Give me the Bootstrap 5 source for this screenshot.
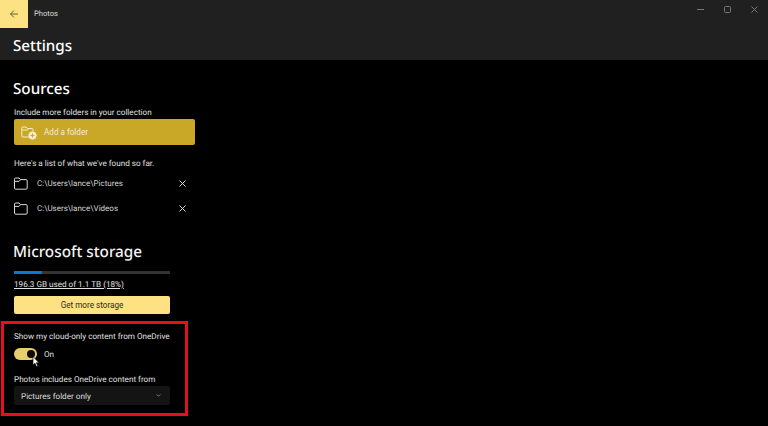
<!DOCTYPE html>
<html>
<head>
    <meta charset="UTF-8">
    <meta name="viewport" content="width=device-width, initial-scale=1">
    <title>Photos Settings</title>
    <link href="https://cdn.jsdelivr.net/npm/bootstrap@5.3.0/dist/css/bootstrap.min.css" rel="stylesheet">
    <style>
        html, body { height: 100%; }
        body {
            background-color: #000;
            color: #e0e0e0;
            font-family: Roboto, "Noto Sans", sans-serif;
            font-size: 8.15px;
            line-height: 12px;
            text-rendering: geometricPrecision;
            overflow: hidden;
        }
        .app-header { background-color: #202020; height: 60px; }
        .title-row { height: 28px; }
        .back-btn { width: 28px; height: 28px; background-color: #fde283; }
        .app-name { margin-left: 6px; font-size: 7.6px; color: #d8d8d8; }
        .win-btns { gap: 20px; padding-right: 10px; padding-top: 6px; align-self: flex-start; }
        .page-title, .head-sources, .head-storage { font-family: "Noto Sans", sans-serif; font-weight: 500; }
        .page-title { font-size: 15.2px; line-height: 20px; color: #fff; margin: 8px 0 0 13px; }
        .content-col { width: 195px; margin-left: 14px; }
        .head-sources { font-size: 15.2px; line-height: 20px; color: #fff; margin: 19px 0 0 -1px; }
        .note-a { margin-top: 7px; }
        .add-btn {
            display: flex; align-items: center; width: 181px; height: 26px; margin-top: 1px;
            padding: 0 0 0 7px; border: 0; border-radius: 2px;
            background-color: #c9a827; color: #f4eccd; font-size: 8.15px;
        }
        .add-btn svg { margin-right: 7px; }
        .note-b { margin-top: 12px; }
        .folder-row { height: 25px; width: 172px; }
        .folder-row span { margin-left: 9px; color: #d4d4d4; font-size: 8px; }
        .folder-list { margin-top: 2px; }
        .head-storage { font-size: 15.3px; line-height: 22px; color: #f4f4f4; margin: 20px 0 0 -1px; }
        .usage-track { width: 156px; height: 3px; background-color: #333; margin-top: 8px; }
        .usage-fill { height: 3px; background-color: #0a78d2; }
        .usage-text { display: block; color: #e0e0e0; margin-top: 4px; text-decoration: underline; }
        .more-btn {
            display: block; width: 156px; height: 18px; margin-top: 6px; padding: 0; border: 0; border-radius: 2px;
            background-color: #fde283; color: #2a2a2a; font-size: 8.15px; line-height: 18px;
        }
        .red-box {
            width: 187px; height: 95px; margin: 7px 0 0 -13px; padding: 6px 0 0 10px;
            border: 3px solid #e3101e;
        }
        .switch-row { margin-top: 6px; height: 12px; position: relative; }
        .switch-track { width: 23px; height: 12px; border-radius: 6px; background-color: #e7cd6d; position: relative; }
        .switch-knob { position: absolute; right: 2px; top: 2px; width: 8px; height: 8px; border-radius: 50%; background-color: #0a0a0a; }
        .switch-row span { margin-left: 7px; }
        .mouse-arrow { position: absolute; left: 18px; top: 8px; }
        .note-c { margin-top: 13px; }
        .drop-box {
            width: 156px; height: 19px; margin-top: 1px; padding: 0 9px 0 7px; border-radius: 2px;
            background-color: #141414; color: #dedede;
        }
    </style>
</head>
<body>
    <div class="app-header">
        <div class="title-row d-flex align-items-center">
            <div class="back-btn d-flex align-items-center justify-content-center">
                <svg width="10" height="10" viewBox="0 0 10 10" fill="none" stroke="#6a5f33" stroke-width="1"><path d="M9 5H1.5M5 1.5L1.5 5L5 8.5"/></svg>
            </div>
            <div class="app-name">Photos</div>
            <div class="win-btns d-flex ms-auto align-items-center">
                <svg width="7" height="7" viewBox="0 0 7 7" stroke="#777" fill="none"><path d="M0 3.5H7"/></svg>
                <svg width="7" height="7" viewBox="0 0 7 7" stroke="#777" fill="none"><rect x=".5" y=".5" width="6" height="6" rx="1"/></svg>
                <svg width="7" height="7" viewBox="0 0 7 7" stroke="#777" fill="none"><path d="M.5 .5L6.5 6.5M6.5 .5L.5 6.5"/></svg>
            </div>
        </div>
        <div class="page-title">Settings</div>
    </div>

    <div class="content-col">
        <div class="head-sources">Sources</div>
        <div class="note-a">Include more folders in your collection</div>
        <button type="button" class="add-btn">
            <svg width="16" height="15" viewBox="0 0 16 15" fill="none" stroke="#f4eccd" stroke-width="1"><path d="M12 6V4.5a1 1 0 0 0-1-1H6.5L5 2H1.8a1 1 0 0 0-1 1v8a1 1 0 0 0 1 1H8"/><path d="M1 5H6.5L7.5 3.7"/><circle cx="11.5" cy="10.5" r="3.7" fill="#f4eccd"/><path d="M11.5 8.5v4M9.5 10.5h4" stroke="#c9a827"/></svg>
            Add a folder
        </button>
        <div class="note-b">Here's a list of what we've found so far.</div>
        <div class="folder-list">
            <div class="folder-row d-flex align-items-center">
                <svg width="14" height="13" viewBox="0 0 14 13" fill="none" stroke="#d8d8d8"><path d="M.5 3V11a1.2 1.2 0 0 0 1.2 1.2H12a1.2 1.2 0 0 0 1.2-1.2V3.8A1.2 1.2 0 0 0 12 2.6H6.5L5 1H1.7A1.2 1.2 0 0 0 .5 2.2Z"/><path d="M.5 4.4H5L6.5 2.8"/></svg>
                <span>C:\Users\lance\Pictures</span>
                <svg class="ms-auto" width="7" height="7" viewBox="0 0 7 7" stroke="#d8d8d8" fill="none"><path d="M.5 .5L6.5 6.5M6.5 .5L.5 6.5"/></svg>
            </div>
            <div class="folder-row d-flex align-items-center">
                <svg width="14" height="13" viewBox="0 0 14 13" fill="none" stroke="#d8d8d8"><path d="M.5 3V11a1.2 1.2 0 0 0 1.2 1.2H12a1.2 1.2 0 0 0 1.2-1.2V3.8A1.2 1.2 0 0 0 12 2.6H6.5L5 1H1.7A1.2 1.2 0 0 0 .5 2.2Z"/><path d="M.5 4.4H5L6.5 2.8"/></svg>
                <span>C:\Users\lance\Videos</span>
                <svg class="ms-auto" width="7" height="7" viewBox="0 0 7 7" stroke="#d8d8d8" fill="none"><path d="M.5 .5L6.5 6.5M6.5 .5L.5 6.5"/></svg>
            </div>
        </div>
        <div class="head-storage">Microsoft storage</div>
        <div class="usage-track"><div class="usage-fill" style="width: 18%"></div></div>
        <a class="usage-text" href="#">196.3 GB used of 1.1 TB (18%)</a>
        <button type="button" class="more-btn">Get more storage</button>

        <div class="red-box">
            <div>Show my cloud-only content from OneDrive</div>
            <div class="switch-row d-flex align-items-center">
                <div class="switch-track"><div class="switch-knob"></div></div>
                <span>On</span>
                <svg class="mouse-arrow" width="8" height="12" viewBox="0 0 8 12"><path d="M1 .5V9L3 7.2L4.4 10.5L5.8 9.9L4.4 6.8H7Z" fill="#fff" stroke="#000" stroke-width=".6"/></svg>
            </div>
            <div class="note-c">Photos includes OneDrive content from</div>
            <div class="drop-box d-flex align-items-center justify-content-between">
                <span>Pictures folder only</span>
                <svg width="5" height="3" viewBox="0 0 6 4" fill="none" stroke="#aaa" stroke-width=".9"><path d="M.5 .5L3 3L5.5 .5"/></svg>
            </div>
        </div>
    </div>
    <script src="https://cdn.jsdelivr.net/npm/bootstrap@5.3.0/dist/js/bootstrap.bundle.min.js"></script>
</body>
</html>
